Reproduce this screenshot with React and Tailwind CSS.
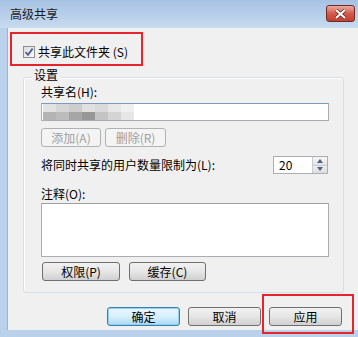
import { useState } from 'react';

const font = { fontFamily: '"Noto Sans CJK SC", "Liberation Sans", sans-serif' };

const blurTop = ['#e2e2e2', '#d6d6d6', '#cdcdcd', '#e0e0e0', '#dadada', '#e8e8e8', '#f0f0f0'];
const blurBottom = ['#b4b4b4', '#bcbcbc', '#a6a6a6', '#979797', '#c4c4c4', '#d4d4d4', '#e6e6e6'];

function Button({ children, width = 'w-[73px]', disabled, focused }) {
  let look = 'border-[#707070] bg-gradient-to-b from-[#f2f2f2] via-[#e6e6e6] to-[#d0d0d0] text-black';
  if (disabled) look = 'border-[#adb2b5] bg-[#f4f4f4] text-[#a0a0a0]';
  if (focused) look = 'border-[#3c7fb1] bg-gradient-to-b from-[#eaf6fd] via-[#d9f0fc] to-[#a7d9f5] text-black shadow-[inset_0_0_0_1px_#8fd0f3]';
  return (
    <button
      disabled={disabled}
      className={`flex h-[19px] ${width} items-center justify-center rounded-[3px] border text-[12px] leading-none ${look}`}
    >
      {children}
    </button>
  );
}

function Checkbox({ checked, onChange }) {
  return (
    <span
      onClick={onChange}
      className="flex h-[12px] w-[12px] items-center justify-center border border-[#8e8f8f] bg-gradient-to-br from-[#dcdcdc] to-[#fbfbfb]"
    >
      {checked && (
        <svg width="10" height="10" viewBox="0 0 10 10">
          <path d="M1.5 5.2 L4 7.8 L8.6 1.6" fill="none" stroke="#4a5f97" strokeWidth="1.8" />
        </svg>
      )}
    </span>
  );
}

export default function App() {
  const [shared, setShared] = useState(true);
  const [limit, setLimit] = useState(20);

  return (
    <div
      className="relative flex h-[337px] w-[358px] flex-col overflow-hidden bg-[#b9d1ea] text-[12px] leading-[16px] text-black"
      style={font}
    >
      <div className="flex h-[28px] shrink-0 items-center justify-between bg-gradient-to-b from-[#a6c2e3] to-[#c8dbf0] pl-[10px] pr-[3px]">
        <span className="text-[12px] text-[#1b1b1b]">高级共享</span>
        <span className="mb-[1px] flex h-[17px] w-[29px] items-center justify-center rounded-[3px] border border-[#6e2b25] bg-gradient-to-b from-[#e9aa9e] via-[#d45a4c] to-[#c2402f]">
          <svg width="13" height="10" viewBox="0 0 13 10">
            <path d="M2 1 L11 9 M11 1 L2 9" stroke="#5a1b14" strokeWidth="3.4" />
            <path d="M2 1 L11 9 M11 1 L2 9" stroke="#ffffff" strokeWidth="2.2" />
          </svg>
        </span>
      </div>

      <div className="mb-[7px] ml-[7px] flex flex-1 flex-col border-l border-[#98b3d2] bg-[#f0f0f0]">
        <label className="mt-[16px] flex items-center gap-[3px] pl-[15px]">
          <Checkbox checked={shared} onChange={() => setShared(!shared)} />
          <span>共享此文件夹 (S)</span>
        </label>

        <div className="relative ml-[15px] mt-[17px] w-[321px] rounded-[3px] border border-[#d5dfe5] pb-[11px] pl-[17px] pr-[14px] pt-[6px] shadow-[inset_1px_1px_0_#ffffff]">
          <span className="absolute left-[8px] top-[-11px] bg-[#f0f0f0] px-[2px]">设置</span>

          <div>共享名(H):</div>
          <div className="mt-[3px] flex h-[18px] w-full items-center border border-[#abadb3] border-t-[#7a9cc0] bg-white px-[1px]">
            <div className="flex flex-col blur-[0.6px]">
              <div className="flex">
                {blurTop.map((c, i) => (
                  <span key={i} className="h-[8px] w-[13px]" style={{ background: c }} />
                ))}
              </div>
              <div className="flex">
                {blurBottom.map((c, i) => (
                  <span key={i} className="h-[8px] w-[13px]" style={{ background: c }} />
                ))}
              </div>
            </div>
          </div>

          <div className="mt-[7px] flex gap-[4px]">
            <Button width="w-[60px]" disabled>添加(A)</Button>
            <Button width="w-[61px]" disabled>删除(R)</Button>
          </div>

          <div className="mt-[9px] flex h-[18px] items-center justify-between pr-[1px]">
            <span>将同时共享的用户数量限制为(L):</span>
            <div className="flex h-[18px] w-[55px] border border-[#abadb3] bg-white">
              <span className="flex-1 pl-[5px] leading-[16px]">{limit}</span>
              <div className="flex w-[15px] flex-col border-l border-[#c8cbd0]">
                <button
                  onClick={() => setLimit(limit + 1)}
                  className="flex flex-1 items-center justify-center border-b border-[#c8cbd0] bg-gradient-to-b from-[#f6f6f6] to-[#e4e4e4]"
                >
                  <svg width="6" height="4" viewBox="0 0 6 4"><path d="M3 0 L6 4 L0 4 Z" fill="#4d6185" /></svg>
                </button>
                <button
                  onClick={() => setLimit(Math.max(1, limit - 1))}
                  className="flex flex-1 items-center justify-center bg-gradient-to-b from-[#eeeeee] to-[#dcdcdc]"
                >
                  <svg width="6" height="4" viewBox="0 0 6 4"><path d="M0 0 L6 0 L3 4 Z" fill="#4d6185" /></svg>
                </button>
              </div>
            </div>
          </div>

          <div className="mt-[12px]">注释(O):</div>
          <div className="mt-[1px] h-[54px] w-full border border-[#abadb3] border-t-[#a0a0a0] bg-white" />

          <div className="ml-[1px] mt-[5px] flex gap-[9px]">
            <Button width="w-[78px]">权限(P)</Button>
            <Button width="w-[77px]">缓存(C)</Button>
          </div>
        </div>

        <div className="mt-[14px] flex justify-end gap-[8px] pr-[16px]">
          <Button focused>确定</Button>
          <Button>取消</Button>
          <Button>应用</Button>
        </div>
      </div>

      <div className="pointer-events-none absolute left-[10px] top-[32px] h-[34px] w-[133px] border-2 border-[#e5242b]" />
      <div className="pointer-events-none absolute left-[262px] top-[294px] h-[40px] w-[92px] border-2 border-[#e5242b]" />
    </div>
  );
}
